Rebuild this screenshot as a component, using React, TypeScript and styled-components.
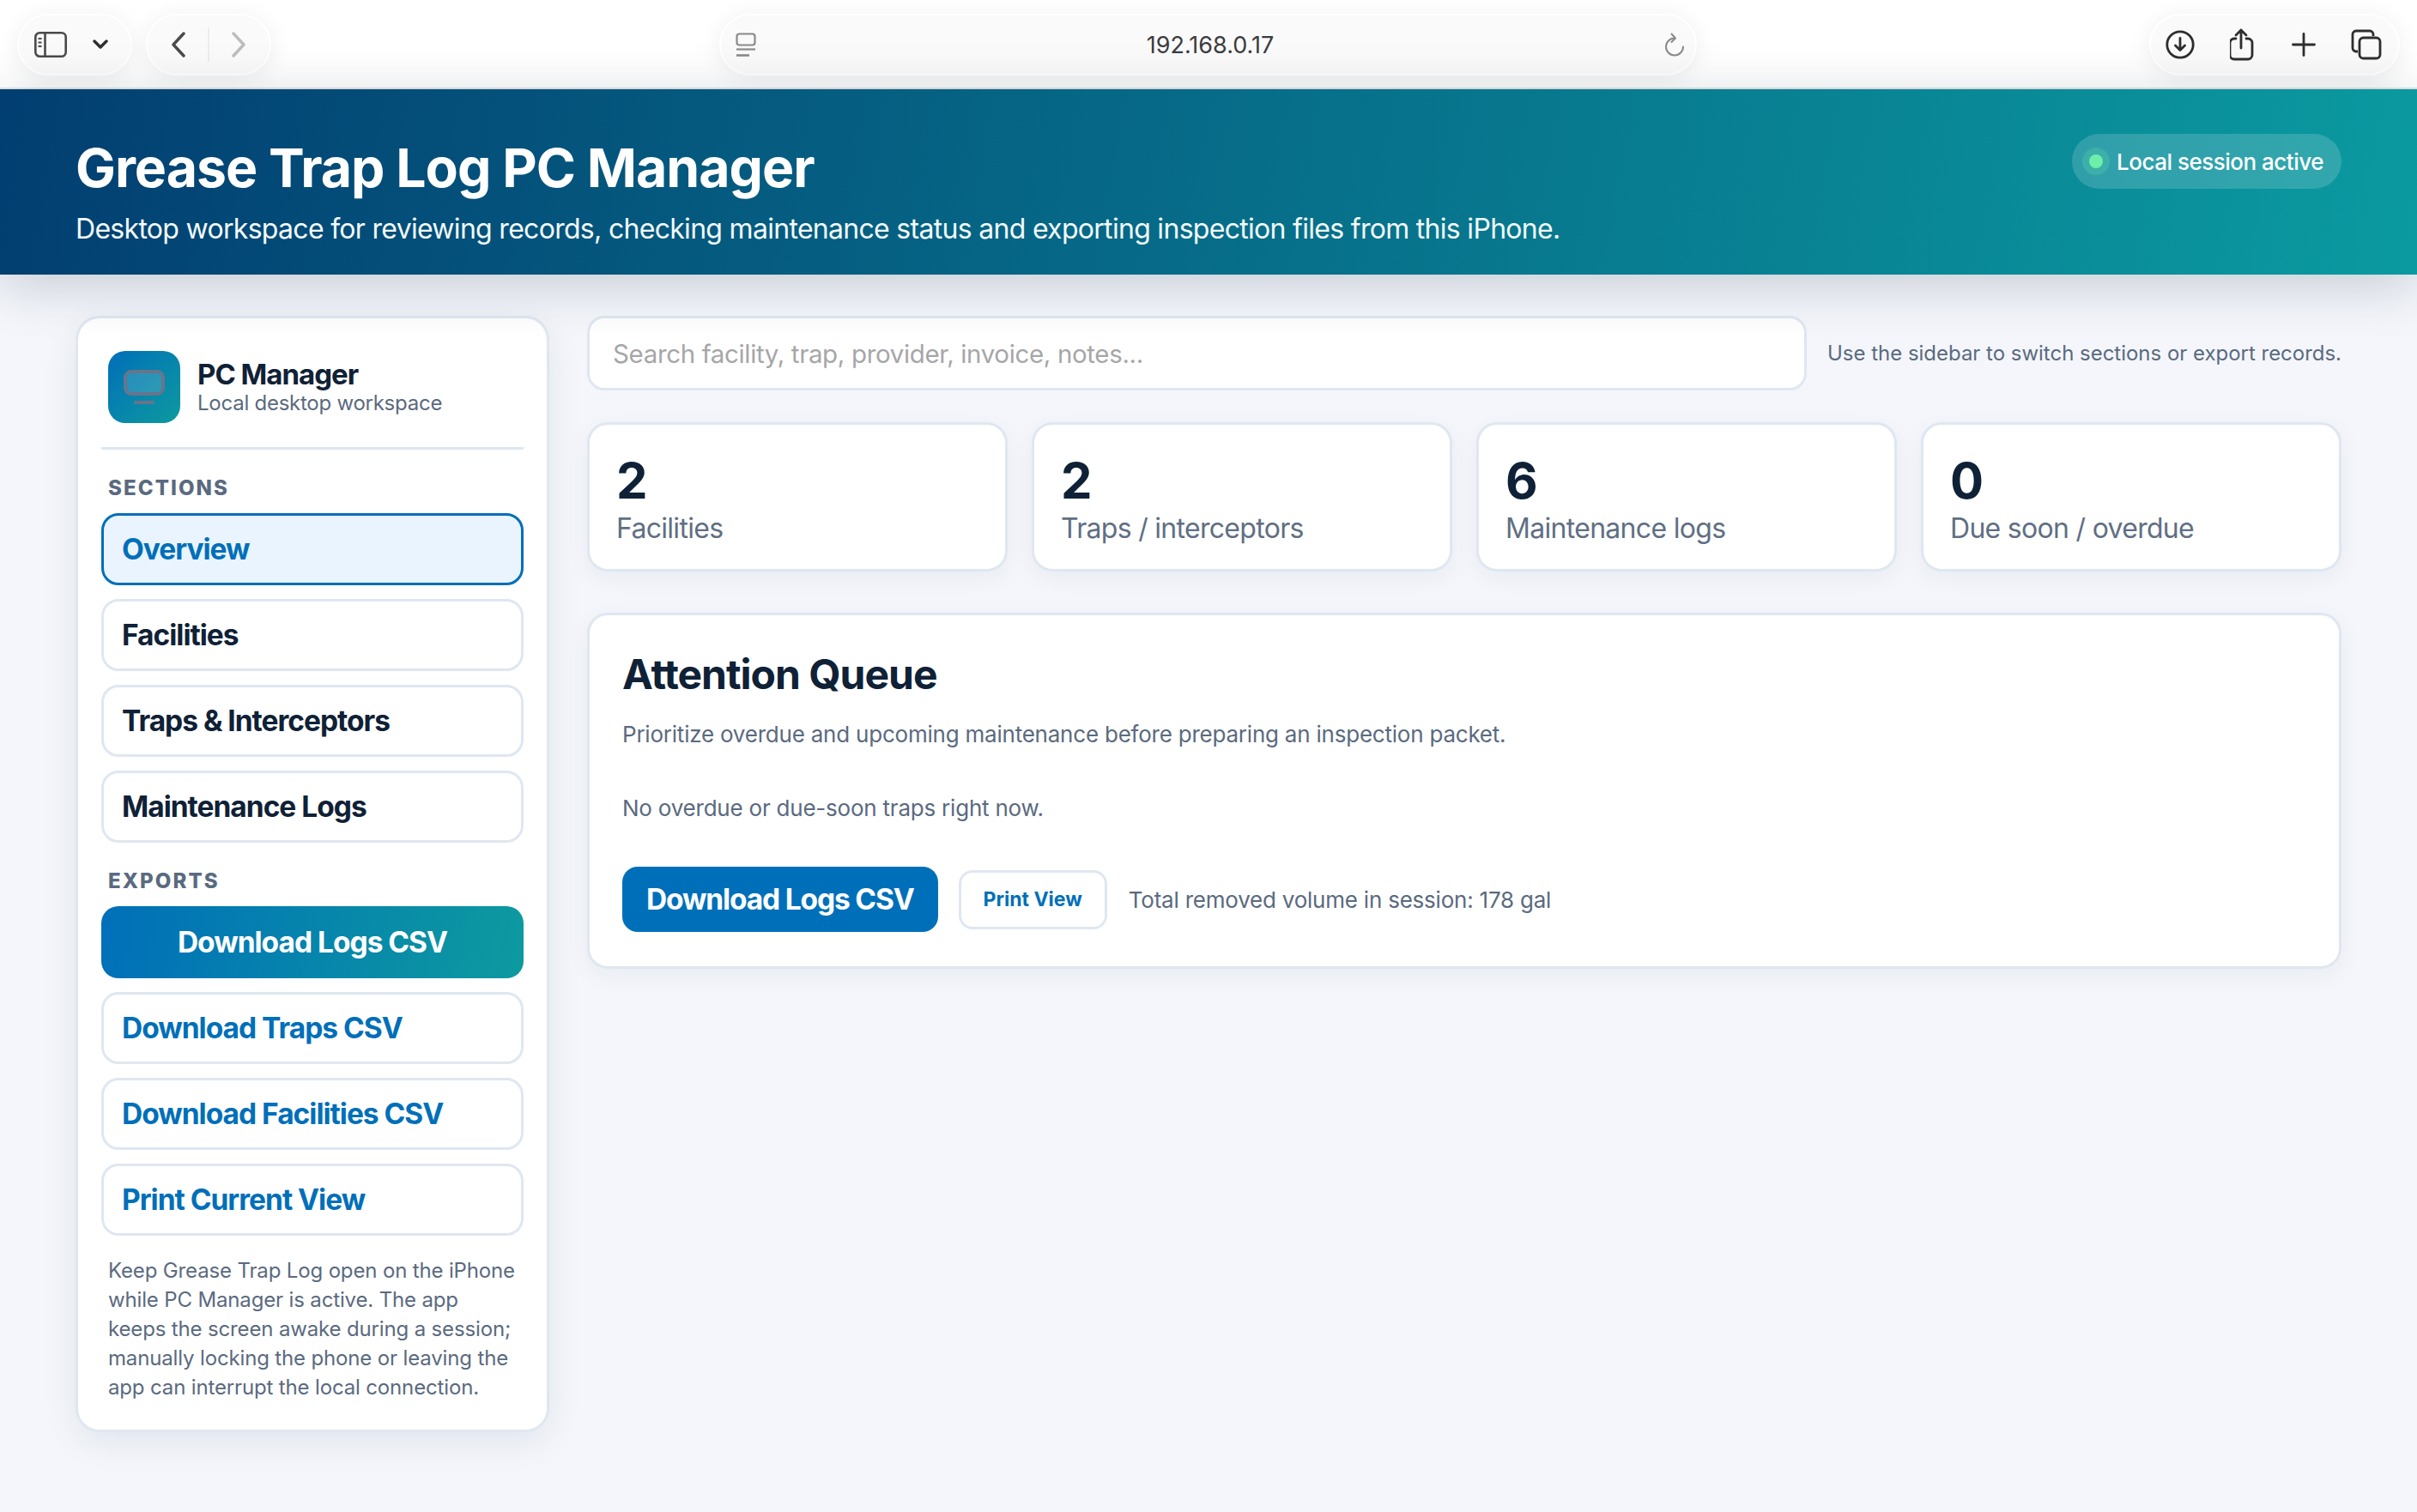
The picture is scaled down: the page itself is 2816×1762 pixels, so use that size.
import React from 'react'
import styled, { createGlobalStyle } from 'styled-components'

const GlobalStyle = createGlobalStyle`
  html, body { margin: 0; padding: 0; }
  body {
    background: #f4f6fb;
    font-family: Inter, "Liberation Sans", sans-serif;
    color: #0f2136;
    min-height: 1762px;
  }
  * { box-sizing: border-box; }
`

const BrowserBar = styled.div`
  height: 104px;
  padding: 16px 20px 0;
  display: flex;
  align-items: flex-start;
  background: #fff;
  border-bottom: 2px solid #e5e5e7;
`

const Pill = styled.div<{ $width: number }>`
  width: ${(p) => p.$width}px;
  height: 72px;
  display: flex;
  align-items: center;
  justify-content: space-between;
  background: #fafafa;
  border: 2px solid #fff;
  border-radius: 36px;
  box-shadow: 0 4px 28px rgba(0, 0, 0, 0.07);
`

const LeftPill = styled(Pill)`
  padding: 0 26px 0 18px;
`

const NavPill = styled(Pill)`
  margin-left: 16px;
  padding: 0 27px;
`

const NavDivider = styled.span`
  width: 2px;
  height: 40px;
  background: #ededed;
`

const AddressPill = styled(Pill)`
  margin-left: 522px;
  padding: 0 12px 0 17px;
`

const AddressText = styled.span`
  font-size: 27px;
  color: #3c3c3e;
`

const ActionsPill = styled(Pill)`
  margin-left: auto;
  padding: 0 19px 0 17px;
`

const Banner = styled.header`
  height: 216px;
  padding: 53px 88px 0;
  display: flex;
  justify-content: space-between;
  align-items: flex-start;
  color: #fff;
  background: linear-gradient(100deg, #023e71 0%, #0b9aa0 100%);
  box-shadow: 0 12px 60px rgba(15, 33, 54, 0.2);
  position: relative;
`

const BannerTitle = styled.h1`
  margin: 0;
  font-size: 62.5px;
  line-height: 76px;
  font-weight: 700;
  letter-spacing: -1px;
`

const BannerText = styled.p`
  margin: 12px 0 0;
  font-size: 32px;
  line-height: 44px;
  letter-spacing: -0.7px;
  color: #f2fafb;
`

const SessionBadge = styled.div`
  height: 64px;
  width: 314px;
  margin-top: -1px;
  padding: 0 20px 0 12px;
  display: flex;
  align-items: center;
  gap: 8px;
  border-radius: 32px;
  background: rgba(255, 255, 255, 0.16);
  font-size: 26px;
  font-weight: 500;
  letter-spacing: -0.5px;
  white-space: nowrap;
`

const SessionDot = styled.span`
  width: 16px;
  height: 16px;
  margin: 8px;
  flex: none;
  border-radius: 50%;
  background: #6eefa9;
  box-shadow: 0 0 0 8px rgba(110, 239, 169, 0.2);
`

const Shell = styled.div`
  padding: 48px 88px 0;
  display: grid;
  grid-template-columns: 552px 1fr;
  gap: 44px;
  align-items: start;
`

const Sidebar = styled.aside`
  padding: 0 27px 32px;
  height: 1301px;
  background: #fff;
  border: 3px solid #dfe7f1;
  border-radius: 28px;
  box-shadow: 0 12px 40px rgba(15, 33, 54, 0.08);
`

const Brand = styled.div`
  height: 153px;
  padding: 38px 8px 0;
  display: flex;
  gap: 20px;
  border-bottom: 3px solid #dfe7f1;
`

const BrandIcon = styled.div`
  width: 84px;
  height: 84px;
  flex: none;
  display: flex;
  align-items: center;
  justify-content: center;
  border-radius: 20px;
  background: linear-gradient(135deg, #006fb9, #0d9a9f);
`

const BrandName = styled.div`
  margin-top: 8px;
  font-size: 33px;
  line-height: 38px;
  font-weight: 700;
  letter-spacing: -1px;
`

const BrandSub = styled.div`
  font-size: 24px;
  line-height: 30px;
  letter-spacing: -0.25px;
  color: #5a6a80;
`

const SectionLabel = styled.div`
  margin: 32px 8px 16px;
  font-size: 24px;
  line-height: 26px;
  font-weight: 800;
  letter-spacing: 2.1px;
  color: #5a6a80;
`

const NavList = styled.div`
  display: flex;
  flex-direction: column;
  gap: 16px;
`

const NavButton = styled.button<{ $tone: 'active' | 'plain' | 'link' | 'fill' }>`
  width: 100%;
  height: 84px;
  padding: 0 21px;
  font-family: inherit;
  font-size: 33.5px;
  font-weight: 700;
  letter-spacing: -1px;
  text-align: ${(p) => (p.$tone === 'fill' ? 'center' : 'left')};
  border-radius: 20px;
  border: 3px solid ${(p) => (p.$tone === 'active' ? '#006fb9' : p.$tone === 'fill' ? 'transparent' : '#dfe7f1')};
  color: ${(p) => (p.$tone === 'plain' ? '#0f2136' : p.$tone === 'fill' ? '#fff' : '#006fb9')};
  background: ${(p) =>
    p.$tone === 'active'
      ? '#eaf4fe'
      : p.$tone === 'fill'
        ? 'linear-gradient(100deg, #006fb9, #0d9a9f) border-box'
        : '#fff'};
`

const SideNote = styled.p`
  margin: 24px 6px 0 8px;
  font-size: 24px;
  line-height: 34px;
  letter-spacing: -0.15px;
  color: #5a6a80;
`

const Main = styled.main`
  display: flex;
  flex-direction: column;
`

const SearchRow = styled.div`
  display: flex;
  align-items: center;
  gap: 24px;
`

const SearchInput = styled.input`
  flex: 1;
  min-width: 0;
  height: 87px;
  padding: 0 27px;
  font-family: inherit;
  font-size: 29.5px;
  letter-spacing: -0.35px;
  color: #0f2136;
  background: #fff;
  border: 3px solid #dfe7f1;
  border-radius: 20px;
  &::placeholder { color: #a6a6a8; }
`

const SearchHint = styled.span`
  font-size: 24px;
  letter-spacing: -0.02px;
  color: #5a6a80;
  white-space: nowrap;
`

const StatGrid = styled.div`
  margin-top: 37px;
  display: grid;
  grid-template-columns: repeat(4, 1fr);
  gap: 28px;
`

const StatCard = styled.div`
  height: 174px;
  padding: 34px 31px 0;
  background: #fff;
  border: 3px solid #dfe7f1;
  border-radius: 24px;
  box-shadow: 0 8px 28px rgba(15, 33, 54, 0.05);
`

const StatValue = styled.div`
  font-size: 58px;
  line-height: 62px;
  font-weight: 700;
`

const StatLabel = styled.div`
  margin-top: 5px;
  font-size: 32px;
  line-height: 40px;
  letter-spacing: -0.7px;
  color: #5f6f84;
`

const Panel = styled.section`
  margin-top: 48px;
  height: 415px;
  padding: 37px 38px 0;
  background: #fff;
  border: 3px solid #dfe7f1;
  border-radius: 24px;
  box-shadow: 0 8px 28px rgba(15, 33, 54, 0.05);
`

const PanelTitle = styled.h2`
  margin: 0;
  font-size: 48px;
  line-height: 64px;
  font-weight: 700;
  letter-spacing: -1px;
`

const PanelText = styled.p<{ $gap: number }>`
  margin: ${(p) => p.$gap}px 0 0;
  font-size: 26px;
  line-height: 36px;
  letter-spacing: -0.22px;
  color: #5a6a80;
`

const ActionRow = styled.div`
  margin-top: 50px;
  display: flex;
  align-items: center;
`

const PrimaryButton = styled.button`
  height: 76px;
  padding: 0 28px;
  font-family: inherit;
  font-size: 33.5px;
  font-weight: 700;
  letter-spacing: -1.15px;
  color: #fff;
  background: #006fb9;
  border: 0;
  border-radius: 18px;
`

const GhostButton = styled.button`
  height: 69px;
  margin-left: 24px;
  padding: 0 26px;
  font-family: inherit;
  font-size: 23px;
  font-weight: 700;
  color: #006fb9;
  background: #fff;
  border: 3px solid #dfe7f1;
  border-radius: 16px;
`

const ActionNote = styled.span`
  margin-left: 25px;
  font-size: 26px;
  letter-spacing: -0.22px;
  color: #5a6a80;
`

const stats = [
  { value: 2, label: 'Facilities' },
  { value: 2, label: 'Traps / interceptors' },
  { value: 6, label: 'Maintenance logs' },
  { value: 0, label: 'Due soon / overdue' },
]

const SidebarIcon = () => (
  <svg width="38" height="30" viewBox="0 0 38 30" fill="none" stroke="#4a4a4c" strokeWidth="2.6">
    <rect x="1.3" y="1.3" width="35.4" height="27.4" rx="5" />
    <path d="M12.5 1.3v27.4" />
    <path d="M4.5 8h4M4.5 12.5h4M4.5 17h4" strokeWidth="2" />
  </svg>
)

const Chevron = ({ d, color, w, h }: { d: string; color: string; w: number; h: number }) => (
  <svg width={w} height={h} viewBox={`0 0 ${w} ${h}`} fill="none" stroke={color} strokeWidth="3.4" strokeLinecap="round" strokeLinejoin="round">
    <path d={d} />
  </svg>
)

const PageIcon = () => (
  <svg width="24" height="28" viewBox="0 0 24 28" fill="none" stroke="#8a8a8c" strokeWidth="2.2">
    <rect x="1.5" y="1.5" width="21" height="13" rx="3" />
    <path d="M1 19.5h22" />
    <path d="M1 26.5h15" strokeWidth="2.6" />
  </svg>
)

const ReloadIcon = () => (
  <svg width="24" height="28" viewBox="0 0 24 28" fill="none" stroke="#8a8a8c" strokeWidth="2" strokeLinecap="round" strokeLinejoin="round">
    <path d="M12 6.5A10 10 0 1 0 22 16.5" />
    <path d="M8.5 1.5L13 6.5l-4.5 4.5" />
  </svg>
)

const DownloadIcon = () => (
  <svg width="34" height="34" viewBox="0 0 34 34" fill="none" stroke="#2e2e30" strokeWidth="2.8" strokeLinecap="round" strokeLinejoin="round">
    <circle cx="17" cy="17" r="15.2" />
    <path d="M17 9.5v14M11.5 18l5.5 5.5 5.5-5.5" />
  </svg>
)

const ShareIcon = () => (
  <svg width="30" height="38" viewBox="2 0 30 38" fill="none" stroke="#2e2e30" strokeWidth="2.8" strokeLinecap="round" strokeLinejoin="round">
    <path d="M9 12H7a5 5 0 0 0-5 5v14a5 5 0 0 0 5 5h16a5 5 0 0 0 5-5V17a5 5 0 0 0-5-5h-2" />
    <path d="M15 23V2M9 8l6-6 6 6" />
  </svg>
)

const PlusIcon = () => (
  <svg width="28" height="28" viewBox="0 0 28 28" fill="none" stroke="#2e2e30" strokeWidth="2.8" strokeLinecap="round">
    <path d="M14 1.5v25M1.5 14h25" />
  </svg>
)

const TabsIcon = () => (
  <svg width="36" height="36" viewBox="0 0 36 36" fill="none" stroke="#2e2e30" strokeWidth="2.8" strokeLinejoin="round">
    <path d="M8 26H6a4 4 0 0 1-4-4V6a4 4 0 0 1 4-4h16a4 4 0 0 1 4 4v2" />
    <rect x="10" y="10" width="24" height="24" rx="4.5" />
  </svg>
)

const MonitorIcon = () => (
  <svg width="48" height="40" viewBox="0 0 48 40" fill="rgba(255,255,255,0.14)" stroke="#69748a" strokeWidth="4" strokeLinecap="round">
    <rect x="2" y="2" width="44" height="26" rx="7" />
    <path d="M14 38h20" fill="none" />
  </svg>
)

export default function App() {
  return (
    <>
      <GlobalStyle />
      <BrowserBar>
        <LeftPill $width={134}>
          <SidebarIcon />
          <Chevron d="M2 2l7 7 7-7" color="#2e2e30" w={18} h={12} />
        </LeftPill>
        <NavPill $width={146}>
          <Chevron d="M15 2L3 15l12 13" color="#4a4a4c" w={17} h={30} />
          <NavDivider />
          <Chevron d="M2 2l12 13L2 28" color="#bcbcbc" w={17} h={30} />
        </NavPill>
        <AddressPill $width={1139}>
          <PageIcon />
          <AddressText>192.168.0.17</AddressText>
          <ReloadIcon />
        </AddressPill>
        <ActionsPill $width={292}>
          <DownloadIcon />
          <ShareIcon />
          <PlusIcon />
          <TabsIcon />
        </ActionsPill>
      </BrowserBar>

      <Banner>
        <div>
          <BannerTitle>Grease Trap Log PC Manager</BannerTitle>
          <BannerText>
            Desktop workspace for reviewing records, checking maintenance status and exporting inspection files from this iPhone.
          </BannerText>
        </div>
        <SessionBadge>
          <SessionDot />
          Local session active
        </SessionBadge>
      </Banner>

      <Shell>
        <Sidebar>
          <Brand>
            <BrandIcon>
              <MonitorIcon />
            </BrandIcon>
            <div>
              <BrandName>PC Manager</BrandName>
              <BrandSub>Local desktop workspace</BrandSub>
            </div>
          </Brand>
          <SectionLabel>SECTIONS</SectionLabel>
          <NavList>
            <NavButton $tone="active">Overview</NavButton>
            <NavButton $tone="plain">Facilities</NavButton>
            <NavButton $tone="plain">Traps &amp; Interceptors</NavButton>
            <NavButton $tone="plain">Maintenance Logs</NavButton>
          </NavList>
          <SectionLabel>EXPORTS</SectionLabel>
          <NavList>
            <NavButton $tone="fill">Download Logs CSV</NavButton>
            <NavButton $tone="link">Download Traps CSV</NavButton>
            <NavButton $tone="link">Download Facilities CSV</NavButton>
            <NavButton $tone="link">Print Current View</NavButton>
          </NavList>
          <SideNote>
            Keep Grease Trap Log open on the iPhone while PC Manager is active. The app keeps the screen awake during a session; manually locking the phone or leaving the app can interrupt the local connection.
          </SideNote>
        </Sidebar>

        <Main>
          <SearchRow>
            <SearchInput placeholder="Search facility, trap, provider, invoice, notes..." />
            <SearchHint>Use the sidebar to switch sections or export records.</SearchHint>
          </SearchRow>
          <StatGrid>
            {stats.map((s) => (
              <StatCard key={s.label}>
                <StatValue>{s.value}</StatValue>
                <StatLabel>{s.label}</StatLabel>
              </StatCard>
            ))}
          </StatGrid>
          <Panel>
            <PanelTitle>Attention Queue</PanelTitle>
            <PanelText $gap={20}>Prioritize overdue and upcoming maintenance before preparing an inspection packet.</PanelText>
            <PanelText $gap={50}>No overdue or due-soon traps right now.</PanelText>
            <ActionRow>
              <PrimaryButton>Download Logs CSV</PrimaryButton>
              <GhostButton>Print View</GhostButton>
              <ActionNote>Total removed volume in session: 178 gal</ActionNote>
            </ActionRow>
          </Panel>
        </Main>
      </Shell>
    </>
  )
}
